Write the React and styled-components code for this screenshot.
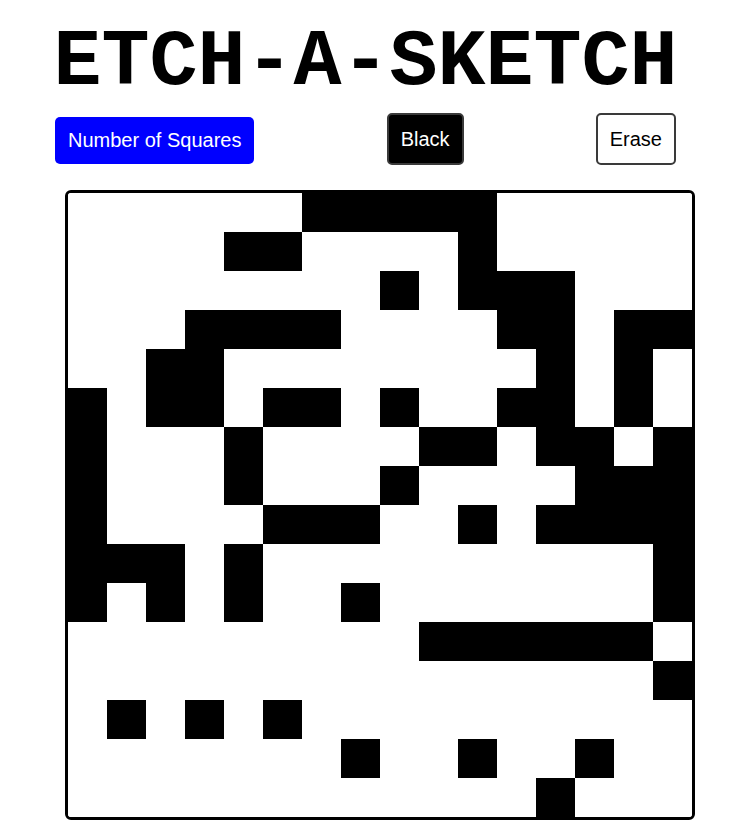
import React from 'react';
import styled, { createGlobalStyle } from 'styled-components';

const GlobalStyle = createGlobalStyle`
  body {
    margin: 0;
    background: #fff;
  }
`;

// 1 = black square, read row by row from the sketch
const rows = [
  '0000001111100000',
  '0000110000100000',
  '0000000010111000',
  '0001111000011011',
  '0011000000001010',
  '1011011010011010',
  '1000100001101101',
  '1000100010000111',
  '1000011100101111',
  '1110100000000001',
  '1010100100000001',
  '0000000001111110',
  '0000000000000001',
  '0101010000000000',
  '0000000100100100',
  '0000000000001000',
];

const Page = styled.div`
  width: 756px;
  padding-top: 23px;
`;

const Title = styled.h1`
  width: 641px;
  margin: 0 0 0 45px;
  font-family: "Liberation Mono", "Courier New", monospace;
  font-size: 80px;
  font-weight: bold;
  line-height: 80px;
  text-align: center;
  white-space: nowrap;
  color: #000;
`;

const Controls = styled.div`
  width: 621px;
  margin: 10px 0 0 55px;
  display: flex;
  justify-content: space-between;
  align-items: flex-start;
`;

const Button = styled.button`
  font-family: "Liberation Sans", Arial, sans-serif;
  font-size: 20px;
  line-height: 23px;
  border-radius: 5px;
  cursor: pointer;
  padding: ${p => (p.$primary ? '12px 13px' : '13px 12px 12px')};
  margin-top: ${p => (p.$primary ? '4px' : '0')};
  border: ${p => (p.$primary ? 'none' : '2px solid #3a3a3a')};
  background: ${p => p.$bg};
  color: ${p => p.$fg};
`;

const Board = styled.div`
  width: 624px;
  margin: 25px 0 0 65px;
  border: 3px solid #000;
  border-radius: 6px;
  overflow: hidden;
  display: grid;
  grid-template-columns: repeat(16, 39px);
  grid-auto-rows: 39px;
`;

const Cell = styled.div`
  background: ${p => (p.$on ? '#000' : '#fff')};
`;

const App = () => {
  return (
    <Page>
      <GlobalStyle />
      <Title>ETCH-A-SKETCH</Title>
      <Controls>
        <Button $primary $bg="#0000ff" $fg="#fff">Number of Squares</Button>
        <Button $bg="#000" $fg="#fff">Black</Button>
        <Button $bg="#fff" $fg="#000">Erase</Button>
      </Controls>
      <Board>
        {rows.map((row, r) =>
          row.split('').map((v, c) => <Cell key={`${r}-${c}`} $on={v === '1'} />)
        )}
      </Board>
    </Page>
  );
};

export default App;
